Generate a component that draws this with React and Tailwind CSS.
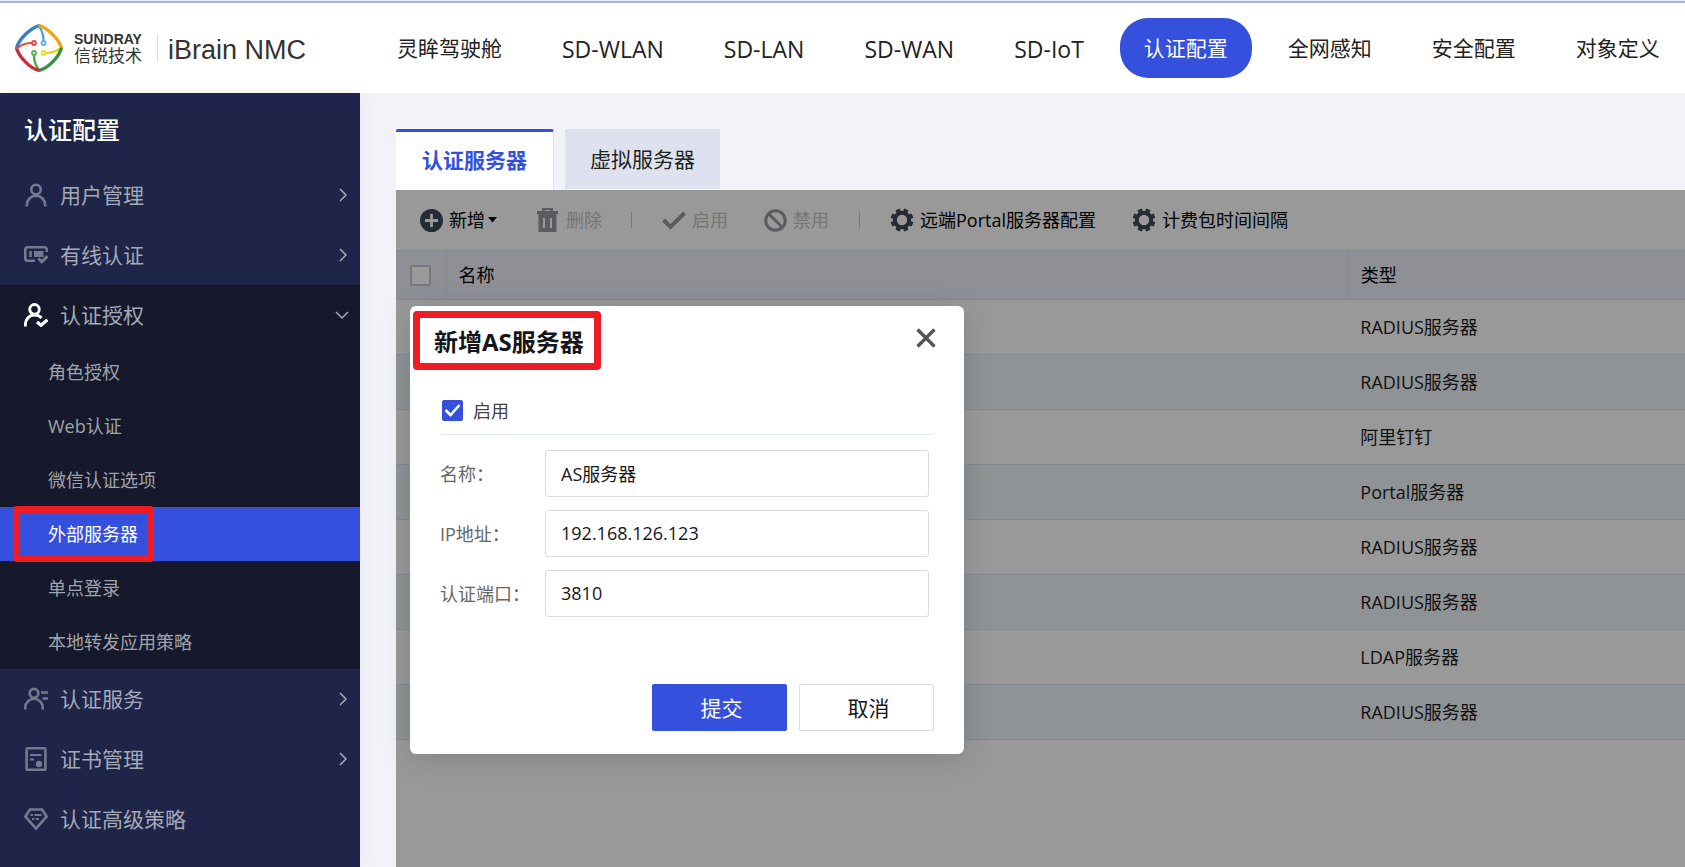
import React, { useState } from "react";

const navItems = [
  { label: "灵眸驾驶舱" },
  { label: "SD-WLAN", latin: true },
  { label: "SD-LAN", latin: true },
  { label: "SD-WAN", latin: true },
  { label: "SD-IoT", latin: true },
  { label: "认证配置", active: true },
  { label: "全网感知" },
  { label: "安全配置" },
  { label: "对象定义" },
];

const subItems = [
  "角色授权",
  "Web认证",
  "微信认证选项",
  "外部服务器",
  "单点登录",
  "本地转发应用策略",
];

const servers = [
  "RADIUS服务器",
  "RADIUS服务器",
  "阿里钉钉",
  "Portal服务器",
  "RADIUS服务器",
  "RADIUS服务器",
  "LDAP服务器",
  "RADIUS服务器",
];

function Logo() {
  return (
    <svg width="48" height="48" viewBox="0 0 48 48" fill="none" strokeLinecap="round">
      <path d="M23.500 1.800C16 4 5 14 1.800 23" stroke="#3b7fc8" strokeWidth="3.400" />
      <path d="M24 2C26 5 28.500 11 28.500 16.500" stroke="#4a9be0" strokeWidth="2.200" />
      <path d="M25 1.800C32 4 43 14 46.200 23" stroke="#eea51c" strokeWidth="3.400" />
      <path d="M46 24C42 27 36 29 31 29" stroke="#f2cf1a" strokeWidth="2.200" />
      <path d="M46.200 25C43 34 33 44 25 46.200" stroke="#35933f" strokeWidth="3.400" />
      <path d="M24 46C21 42 19 36 19 32" stroke="#43a53d" strokeWidth="2.200" />
      <path d="M1.800 25C5 34 15 44 23 46.200" stroke="#c62f3b" strokeWidth="3.400" />
      <path d="M2 24C6 21 11 19 16.500 19" stroke="#e0533c" strokeWidth="2.200" />
      <circle cx="19" cy="19" r="2" stroke="#e8483f" strokeWidth="1.800" />
      <circle cx="28.500" cy="19" r="2" stroke="#5db0ee" strokeWidth="1.800" />
      <circle cx="28.500" cy="29" r="2" stroke="#f5dc22" strokeWidth="1.800" />
      <circle cx="19" cy="29" r="2" stroke="#52b344" strokeWidth="1.800" />
    </svg>
  );
}

function MenuIcon({ name }) {
  return (
    <svg width="24" height="24" viewBox="0 0 24 24" fill="none" stroke="currentColor" strokeWidth="2.600" className="shrink-0">
      {name === "user" && (
        <>
          <circle cx="12" cy="6.500" r="4.800" />
          <path d="M2.800 23.500v-1.500a9.200 9.200 0 0 1 18.400 0v1.500" />
        </>
      )}
      {name === "wired" && (
        <>
          <path d="M11 17.800H3.500A2.200 2.200 0 0 1 1.300 15.600v-9A2.200 2.200 0 0 1 3.500 4.300h17A2.200 2.200 0 0 1 22.700 6.500V9" />
          <path d="M6.500 8v6" />
          <path d="M10 8h9.500v6H10z" fill="currentColor" stroke="none" />
          <path d="M14.500 15.500l3.300 3.300 5.700-5.700" strokeWidth="3" />
        </>
      )}
      {name === "grant" && (
        <>
          <circle cx="10.500" cy="6.300" r="4.800" strokeWidth="2.800" />
          <path d="M1.400 23.500v-1.500c0-6 4-10 9.100-10 3 0 5.500 1.200 7 3" strokeWidth="2.800" />
          <path d="M13 19l4 3.300 6.500-5.500" strokeWidth="3.200" />
        </>
      )}
      {name === "service" && (
        <>
          <circle cx="10" cy="6.300" r="4.400" />
          <path d="M1.300 22.500v-2a8.700 8.700 0 0 1 17.400 0v2M17 5.500h7M18.500 11.500H24" />
        </>
      )}
      {name === "cert" && (
        <>
          <rect x="2.600" y="1.300" width="18.800" height="21.400" rx="1" />
          <path d="M6 8h11.500M6 12.500h4" strokeWidth="2.200" />
          <circle cx="15" cy="17" r="3.200" fill="currentColor" stroke="none" />
        </>
      )}
      {name === "diamond" && (
        <>
          <path d="M6 2.500h12l4.600 7L12 21.500 1.400 9.500z" />
          <path d="M6.500 8H9M10.500 8h7M8 12h2.500M12 12h3" strokeWidth="2.200" />
        </>
      )}
    </svg>
  );
}

function Chevron({ down }) {
  return (
    <svg width="14" height="14" viewBox="0 0 14 14" fill="none" stroke="currentColor" strokeWidth="1.500">
      <path d={down ? "M1 4l6 6 6-6" : "M5 1l6 6-6 6"} />
    </svg>
  );
}

function GearIcon() {
  return (
    <svg width="24" height="24" viewBox="0 0 24 24" fill="none" stroke="currentColor">
      <circle cx="12" cy="12" r="7.200" strokeWidth="4" />
      {/* eight teeth, starting half a step off the vertical */}
      <g strokeWidth="4.600" strokeLinejoin="round">
        <path d="M12 .6v4M12 19.400v4M.6 12h4M19.400 12h4" transform="rotate(22.500 12 12)" />
        <path d="M12 .6v4M12 19.400v4M.6 12h4M19.400 12h4" transform="rotate(67.500 12 12)" />
      </g>
    </svg>
  );
}

function MenuItem({ icon, label, open, noArrow }) {
  return (
    <a href="#" className="flex h-[60px] items-center pl-6 pr-[11px] text-[21px] text-[#a5a8b6]">
      <span className={open ? "text-white" : "text-[#747990]"}>
        <MenuIcon name={icon} />
      </span>
      <span className="ml-3 flex-1 pt-0.5">{label}</span>
      {!noArrow && <Chevron down={open} />}
    </a>
  );
}

function Sidebar() {
  return (
    <aside className="w-[360px] shrink-0 bg-[#1e2548] shadow-[0_0_18px_rgba(0,0,0,0.05)]">
      <h2 className="flex h-[72px] items-center pl-6 pt-0.5 text-2xl font-medium text-white">认证配置</h2>
      <nav>
        <MenuItem icon="user" label="用户管理" />
        <MenuItem icon="wired" label="有线认证" />
        <div className="bg-[#15192b]">
          <MenuItem icon="grant" label="认证授权" open />
          {subItems.map((item) =>
            item === "外部服务器" ? (
              <a key={item} href="#" className="relative flex h-[54px] items-center bg-[#3450dc] pl-12 text-lg text-white">
                {item}
                <span className="absolute -top-px left-[13px] h-14 w-[141px] rounded border-[7px] border-[#ee1c24]" />
              </a>
            ) : (
              <a key={item} href="#" className="flex h-[54px] items-center pl-12 text-lg text-[#a1a3aa]">
                {item}
              </a>
            )
          )}
        </div>
        <MenuItem icon="service" label="认证服务" />
        <MenuItem icon="cert" label="证书管理" />
        <MenuItem icon="diamond" label="认证高级策略" noArrow />
      </nav>
    </aside>
  );
}

function Toolbar() {
  return (
    <div className="flex h-[60px] items-center whitespace-nowrap pl-6 text-lg leading-6 text-black">
      <button className="flex w-[117px] items-center text-[#414859]">
        <svg width="23" height="23" viewBox="0 0 23 23">
          <circle cx="11.500" cy="11.500" r="11.500" fill="currentColor" />
          <path d="M11.500 5v13M5 11.500h13" stroke="#fff" strokeWidth="2.800" />
        </svg>
        <span className="ml-1.5 text-black">新增</span>
        <svg width="9" height="6" viewBox="0 0 9 6" className="ml-[3px]">
          <path d="M0 0h9L4.500 5.500z" fill="#000" />
        </svg>
      </button>
      <button disabled className="flex w-[94px] items-center text-[#98999f]">
        <svg width="21" height="24" viewBox="0 0 21 24" fill="currentColor">
          <path d="M5 0h11v3h5v3H0V3h5zM8 2v1h5V2z" fillRule="evenodd" />
          <path d="M1.500 6h18v18h-18zM6 10v10h2V10zm7 0v10h2V10z" fillRule="evenodd" />
        </svg>
        <span className="ml-2 text-[#c6c6c6]">删除</span>
      </button>
      <span className="h-4 w-px bg-[#c6c6c6]" />
      <button disabled className="ml-[30px] flex w-[102px] items-center text-[#98999f]">
        <svg width="24" height="20" viewBox="0 0 24 20" fill="none" stroke="currentColor" strokeWidth="4">
          <path d="M1.500 10l7 7L22.500 3" />
        </svg>
        <span className="ml-1.5 text-[#c6c6c6]">启用</span>
      </button>
      <button disabled className="flex w-[95px] items-center text-[#98999f]">
        <svg width="23" height="23" viewBox="0 0 23 23" fill="none" stroke="currentColor" strokeWidth="3">
          <circle cx="11.500" cy="11.500" r="9.800" />
          <path d="M4.500 4.500l14 14" />
        </svg>
        <span className="ml-1.5 text-[#c6c6c6]">禁用</span>
      </button>
      <span className="h-4 w-px bg-[#c6c6c6]" />
      <button className="ml-[30px] flex items-center text-[#414859]">
        <GearIcon />
        <span className="ml-1.5 text-black">远端Portal服务器配置</span>
      </button>
      <button className="ml-9 flex items-center text-[#414859]">
        <GearIcon />
        <span className="ml-1.5 text-black">计费包时间间隔</span>
      </button>
    </div>
  );
}

function ServerTable() {
  return (
    <table className="w-full table-fixed border-collapse text-left text-lg leading-6 text-[#1c1c1c]">
      <thead>
        <tr className="h-[49px] border-y border-[#e0e4f0] bg-[#eef1f8] text-black">
          <th className="w-[50px] border-r border-[#e0e4f0] pl-3.5">
            <input
              type="checkbox"
              aria-label="全选"
              className="block size-[21px] appearance-none rounded-xs border-2 border-[#c8c8c8] bg-white"
            />
          </th>
          <th className="w-[70%] border-r border-[#e0e4f0] pl-3 font-normal">名称</th>
          <th className="pl-3 font-normal">类型</th>
        </tr>
      </thead>
      <tbody>
        {servers.map((type, i) => (
          <tr key={i} className="h-[55px] border-b border-[#e0e4f0] even:bg-[#f0f5f8]">
            <td></td>
            <td></td>
            <td className="pl-3">{type}</td>
          </tr>
        ))}
      </tbody>
    </table>
  );
}

function Field({ id, label, value, onChange }) {
  return (
    <div className="flex items-center">
      <label htmlFor={id} className="w-[105px] shrink-0 text-lg text-[#666]">
        {label}：
      </label>
      <input
        id={id}
        type="text"
        value={value}
        onChange={(e) => onChange(id, e.target.value)}
        className="h-[47px] min-w-0 flex-1 rounded-[3px] border border-[#dcdcdc] px-[15px] pb-0.5 text-lg text-[#14161c] outline-none"
      />
    </div>
  );
}

function AddServerDialog() {
  const [enabled, setEnabled] = useState(true);
  const [form, setForm] = useState({
    name: "AS服务器",
    ip: "192.168.126.123",
    port: "3810",
  });

  const update = (id, value) => setForm({ ...form, [id]: value });

  return (
    <form
      role="dialog"
      aria-labelledby="dialog-title"
      onSubmit={(e) => e.preventDefault()}
      className="absolute left-3.5 top-[116px] w-[554px] rounded-md bg-white pb-[23px] shadow-[0_4px_30px_rgba(0,0,0,0.15)]"
    >
      <div className="flex h-[72px] items-center justify-between pl-6 pr-7">
        <h3 id="dialog-title" className="text-2xl font-bold text-[#14161c]">
          新增AS服务器
        </h3>
        <button type="button" aria-label="关闭" className="mb-2 text-[#555]">
          <svg width="20" height="20" viewBox="0 0 20 20" fill="none" stroke="currentColor" strokeWidth="3.400">
            <path d="M1.500 1.500l17 17M18.500 1.500l-17 17" />
          </svg>
        </button>
        <span className="absolute left-[3px] top-[5px] h-[59px] w-[188px] rounded border-[7px] border-[#ee1c24]" />
      </div>

      <div className="ml-[31px] mr-[30px] border-b border-[#dfe3ec] pb-1.5 pt-[15px]">
        <label className="flex h-[35px] items-center pl-px text-lg text-[#444]">
          <span className="relative mr-2.5 block size-[21px]">
            <input
              type="checkbox"
              checked={enabled}
              onChange={(e) => setEnabled(e.target.checked)}
              className="block size-[21px] appearance-none rounded-xs border border-[#3450dc] checked:bg-[#3450dc]"
            />
            {enabled && (
              <svg width="21" height="21" viewBox="0 0 21 21" fill="none" stroke="#fff" strokeWidth="2.600" className="pointer-events-none absolute inset-0">
                <path d="M3.500 10l5 5L17.500 5" />
              </svg>
            )}
          </span>
          启用
        </label>
      </div>

      <div className="ml-[30px] mr-[35px] mt-[15px] flex flex-col gap-[13px]">
        <Field id="name" label="名称" value={form.name} onChange={update} />
        <Field id="ip" label="IP地址" value={form.ip} onChange={update} />
        <Field id="port" label="认证端口" value={form.port} onChange={update} />
      </div>

      <div className="mr-[30px] mt-[67px] flex justify-end gap-3 text-[21px]">
        <button type="submit" className="h-[47px] w-[135px] rounded-xs bg-[#3450dc] pl-1 pt-0.5 text-white">
          提交
        </button>
        <button type="button" className="h-[47px] w-[135px] rounded-xs border border-[#dcdcdc] bg-white pl-1 pt-0.5 text-[#14161c]">
          取消
        </button>
      </div>
    </form>
  );
}

export default function App() {
  return (
    <div
      lang="zh-CN"
      className="flex min-h-screen flex-col overflow-hidden bg-[#f2f3f9] font-['Open_Sans','Noto_Sans_CJK_SC',sans-serif]"
    >
      <div className="h-[3px] border-b-2 border-[#adb8c9] bg-[#e3ecf8]" />
      <header className="flex h-[90px] items-center whitespace-nowrap bg-white">
        <div className="flex w-[373px] shrink-0 items-center pl-[15px]">
          <Logo />
          <div className="ml-[11px] flex flex-col text-[#333]">
            <span className="font-['Liberation_Sans',sans-serif] text-sm font-bold leading-[14px]">SUNDRAY</span>
            <span className="text-[17px] leading-[19px]">信锐技术</span>
          </div>
          <span className="ml-[15px] h-7 w-px bg-[#dcdcdc]" />
          <span className="ml-2.5 pt-1 font-['Liberation_Sans',sans-serif] text-[27px] leading-8 text-[#333]">iBrain NMC</span>
        </div>
        <nav className="flex items-center gap-3">
          {navItems.map((item) => (
            <a
              key={item.label}
              href="#"
              className={`flex h-[60px] items-center rounded-[28px] px-6 pt-0.5 ${
                item.latin ? "text-[23px]" : "text-[21px]"
              } ${item.active ? "bg-[#3450dc] text-white" : "text-[#222]"}`}
            >
              {item.label}
            </a>
          ))}
        </nav>
      </header>

      <div className="flex flex-1">
        <Sidebar />
        <main className="flex min-w-0 flex-1 flex-col pl-9 pt-9">
          <div role="tablist" className="flex items-start gap-[11px] text-[21px]">
            <button
              role="tab"
              aria-selected="true"
              className="h-[61px] rounded-t-xs border-r border-t-[3px] border-r-[#e0e3ea] border-t-[#3450dc] bg-white px-[26px] font-bold text-[#3450dc]"
            >
              认证服务器
            </button>
            <button role="tab" aria-selected="false" className="h-[60px] rounded-t-xs bg-[#dee2ee] px-[25px] pt-0.5 text-[#222]">
              虚拟服务器
            </button>
          </div>
          <section className="relative flex-1 bg-white">
            <Toolbar />
            <ServerTable />
            <div className="absolute inset-0 bg-black/40" />
            <AddServerDialog />
          </section>
        </main>
      </div>
    </div>
  );
}
